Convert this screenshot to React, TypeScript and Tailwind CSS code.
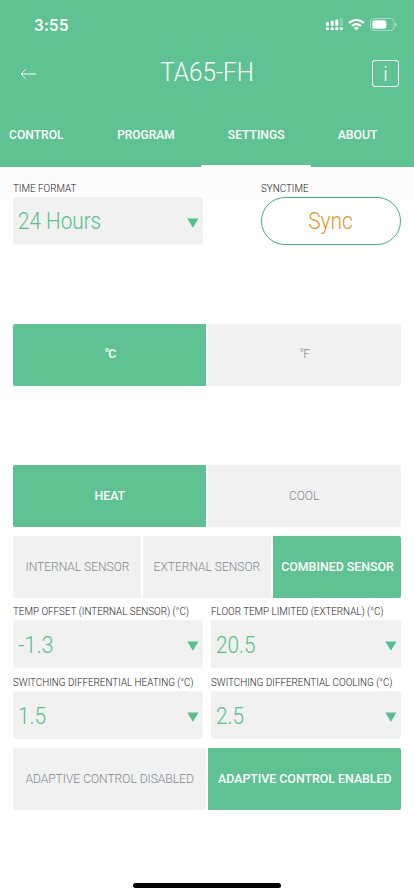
import React from 'react';

const Caret = () => (
  <svg width="12" height="10" viewBox="0 0 12 10" className="shrink-0">
    <path d="M0.3 0.5h11.2L5.9 9.8z" fill="#55bf8d" />
  </svg>
);

const labelClass = 'flex h-[18px] origin-left scale-x-[0.87] items-center whitespace-nowrap pt-[2px] text-[11.3px] font-light text-[#222]';

type FieldProps = { label: string; value: string; valueClass?: string };

function Field({ label, value, valueClass = 'pt-[4px] scale-x-[0.9]' }: FieldProps) {
  return (
    <div className="w-[190px]">
      <div className={labelClass}>{label}</div>
      <div className="flex h-[48px] items-center justify-between rounded-[3px] bg-[#f1f1f1] pr-1 pl-[4.5px]">
        <span className={`origin-left whitespace-nowrap text-[23px] leading-[46px] font-light text-[#55bf8d] ${valueClass}`}>{value}</span>
        <span className="mt-[4px]"><Caret /></span>
      </div>
    </div>
  );
}

type Option = { text: string; active?: boolean; tight?: boolean };

function Segments({ options }: { options: Option[] }) {
  return (
    <div className="flex h-[62px] gap-[2px] overflow-hidden rounded-[2px]">
      {options.map((o) => (
        <div
          key={o.text}
          className={`flex flex-1 basis-0 items-center justify-center whitespace-nowrap pb-[2px] text-[13.5px] ${
            o.active ? 'bg-[#5ec292] font-medium text-white' : 'bg-[#f1f1f1] font-light text-[#85888c]'
          } ${o.tight ? 'pb-[3px] tracking-[-1px]' : ''}`}
        >
          <span className={o.active ? 'scale-x-[0.915]' : 'scale-x-[0.89]'}>{o.text}</span>
        </div>
      ))}
    </div>
  );
}

export default function App() {
  return (
    <div className="flex h-[896px] w-[414px] flex-col overflow-hidden bg-white font-['Roboto','Liberation_Sans',sans-serif]">
      <header className="flex h-[167px] shrink-0 flex-col bg-[#5ec292] text-white">
        <div className="flex h-[50px] items-center justify-between pr-[17px] pl-[34px]">
          <span className="origin-left scale-x-[0.95] text-[16px] font-semibold tracking-[0.3px] font-['Inter',sans-serif]">3:55</span>
          <svg width="72" height="14" viewBox="0 0 72 14" fill="white">
            <rect x="1" y="4" width="3" height="4" rx="1" />
            <rect x="5.7" y="2.8" width="3" height="5.2" rx="1" />
            <rect x="10.3" y="1.5" width="3" height="6.5" rx="1" />
            <rect x="14.8" y="0" width="3" height="8" rx="1" opacity=".25" />
            <rect x="1" y="9.2" width="3" height="3" rx="1" />
            <rect x="5.7" y="9.2" width="3" height="3" rx="1" />
            <rect x="10.3" y="9.2" width="3" height="3" rx="1" />
            <rect x="14.8" y="9.2" width="3" height="3" rx="1" />
            <g fill="none" stroke="white" strokeWidth="2.2">
              <path d="M24 5.1a10.4 10.4 0 0 1 14.8 0" />
              <path d="M26.9 8a6.4 6.4 0 0 1 9 0" />
            </g>
            <path d="M28.9 10a3.7 3.7 0 0 1 5 0l-2.5 2.4z" />
            <rect x="45.5" y="0.5" width="23.5" height="12" rx="3.4" fill="none" stroke="white" strokeOpacity=".45" />
            <rect x="47.3" y="2.3" width="14" height="8.4" rx="1.7" />
            <path d="M70.2 4.4v4.2c.9-.4 1.5-1.1 1.5-2.1s-.6-1.7-1.5-2.1z" opacity=".5" />
          </svg>
        </div>
        <div className="flex h-[46px] items-center justify-between pr-[15px] pl-[20px]">
          <svg width="17" height="12" viewBox="0 0 17 12" fill="none" stroke="white" strokeWidth="1" className="mt-[2px]">
            <path d="M16 6H1M6.2.8L1 6l5.2 5.2" />
          </svg>
          <h1 className="ml-[6px] scale-x-[0.935] pb-[1px] text-[26px] font-light">TA65-FH</h1>
          <div className="mt-[1px] flex h-[27px] w-[27px] items-center justify-center rounded-[3px] border border-white text-[20px] font-light">
            i
          </div>
        </div>
        <nav className="grid h-[71px] grid-cols-[91px_110px_110px_93px] pr-[10px] text-[13.3px] font-medium">
          <div className="pt-[29px] pl-[9px]"><span className="inline-block origin-left scale-x-[0.91]">CONTROL</span></div>
          <div className="pt-[29px] text-center"><span className="inline-block scale-x-[0.9]">PROGRAM</span></div>
          <div className="border-b-2 border-white pt-[29px] text-center"><span className="inline-block scale-x-[0.91]">SETTINGS</span></div>
          <div className="pt-[29px] text-center"><span className="inline-block scale-x-[0.92]">ABOUT</span></div>
        </nav>
      </header>

      <main className="flex grow flex-col bg-linear-to-b from-[#fafafa] to-white to-[60px] px-[13px] pt-[12px]">
        <div className="flex justify-between">
          <Field label="TIME FORMAT" value="24 Hours" valueClass="pt-[2px] scale-x-[0.9]" />
          <div className="w-[140px]">
            <div className={labelClass}>SYNCTIME</div>
            <button className="flex h-[48px] w-full items-center justify-center rounded-full border border-[#3fb57f] bg-white pt-[2px] text-[23px] font-light text-[#e0981e]">
              <span className="scale-x-[0.91]">Sync</span>
            </button>
          </div>
        </div>

        <div className="mt-[79px]">
          <Segments options={[{ text: '°C', active: true, tight: true }, { text: '°F', tight: true }]} />
        </div>
        <div className="mt-[79px]">
          <Segments options={[{ text: 'HEAT', active: true }, { text: 'COOL' }]} />
        </div>
        <div className="mt-[9px]">
          <Segments
            options={[
              { text: 'INTERNAL SENSOR' },
              { text: 'EXTERNAL SENSOR' },
              { text: 'COMBINED SENSOR', active: true },
            ]}
          />
        </div>
        <div className="mt-[4px] flex justify-between">
          <Field label="TEMP OFFSET (INTERNAL SENSOR) (°C)" value="-1.3" valueClass="pt-[4px] scale-x-[0.95]" />
          <Field label="FLOOR TEMP LIMITED (EXTERNAL) (°C)" value="20.5" />
        </div>
        <div className="mt-[5px] flex justify-between">
          <Field label="SWITCHING DIFFERENTIAL HEATING (°C)" value="1.5" />
          <Field label="SWITCHING DIFFERENTIAL COOLING (°C)" value="2.5" />
        </div>
        <div className="mt-[9px]">
          <Segments options={[{ text: 'ADAPTIVE CONTROL DISABLED' }, { text: 'ADAPTIVE CONTROL ENABLED', active: true }]} />
        </div>
        <div className="mt-auto mb-[8px] h-[5px] w-[148px] self-center rounded-full bg-black" />
      </main>
    </div>
  );
}
